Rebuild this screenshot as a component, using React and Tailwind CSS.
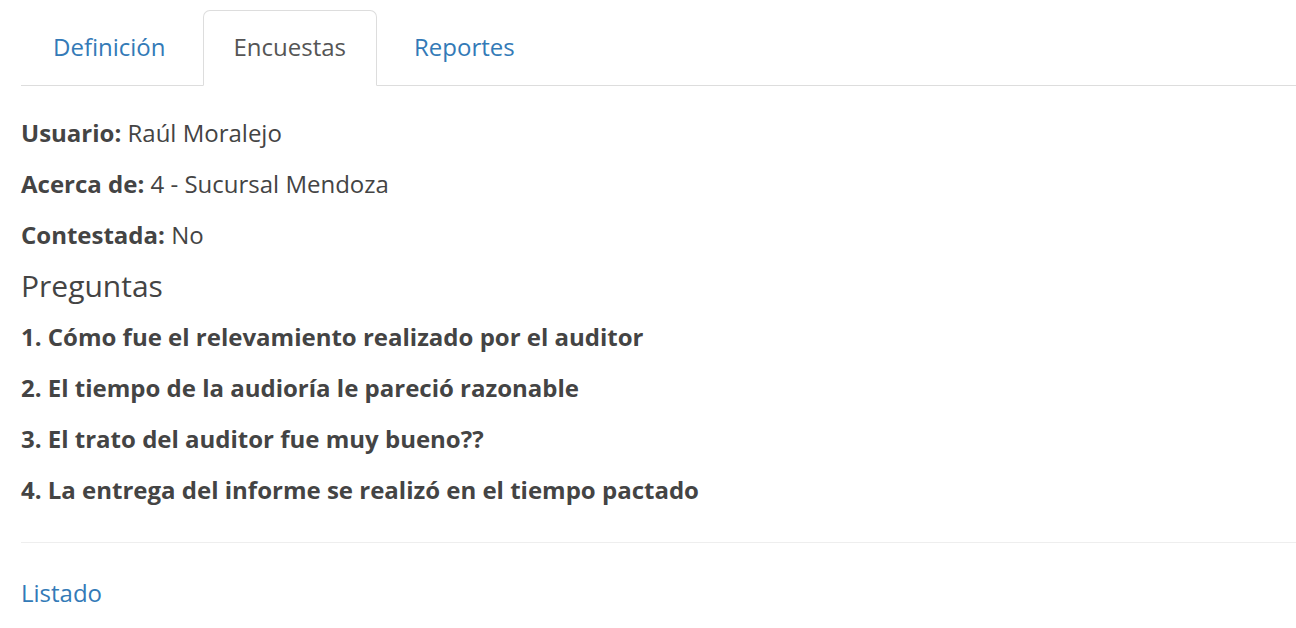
export default function App() {
  const tabs = [
    { label: "Definición", active: false },
    { label: "Encuestas", active: true },
    { label: "Reportes", active: false },
  ];

  const preguntas = [
    "1. Cómo fue el relevamiento realizado por el auditor",
    "2. El tiempo de la audioría le pareció razonable",
    "3. El trato del auditor fue muy bueno??",
    "4. La entrega del informe se realizó en el tiempo pactado",
  ];

  return (
    <div
      className="min-h-screen bg-white pl-[21px] text-[24px] leading-[34px] text-[#444]"
      style={{ fontFamily: '"Open Sans", "Liberation Sans", sans-serif' }}
    >
      {/* Tabs */}
      <ul className="mt-[10px] flex border-b border-[#ddd]">
        {tabs.map((tab) => (
          <li key={tab.label} className="-mb-px mr-[5px]">
            <a
              href="#"
              className={
                tab.active
                  ? "block rounded-t-[7px] border border-[#ddd] border-b-transparent bg-white px-[30px] pt-[19px] pb-[21px] text-[#555]"
                  : "block rounded-t-[7px] border border-transparent px-[31px] pt-[19px] pb-[21px] text-[#337ab7]"
              }
            >
              {tab.label}
            </a>
          </li>
        ))}
      </ul>

      {/* Tab content */}
      <div className="pt-[30px]">
        <p className="mb-[17px]">
          <b>Usuario:</b> Raúl Moralejo
        </p>
        <p className="mb-[17px]">
          <b>Acerca de:</b> 4 - Sucursal Mendoza
        </p>
        <p className="mb-[17px]">
          <b>Contestada:</b> No
        </p>

        <h4 className="mb-[17px] text-[30px] leading-[34px] font-normal">Preguntas</h4>

        {preguntas.map((q) => (
          <p key={q} className="mb-[17px] font-bold">
            {q}
          </p>
        ))}

        <hr className="mt-[35px] mb-[33px] border-t border-[#eee]" />

        <a href="#" className="text-[#337ab7]">
          Listado
        </a>
      </div>
    </div>
  );
}
